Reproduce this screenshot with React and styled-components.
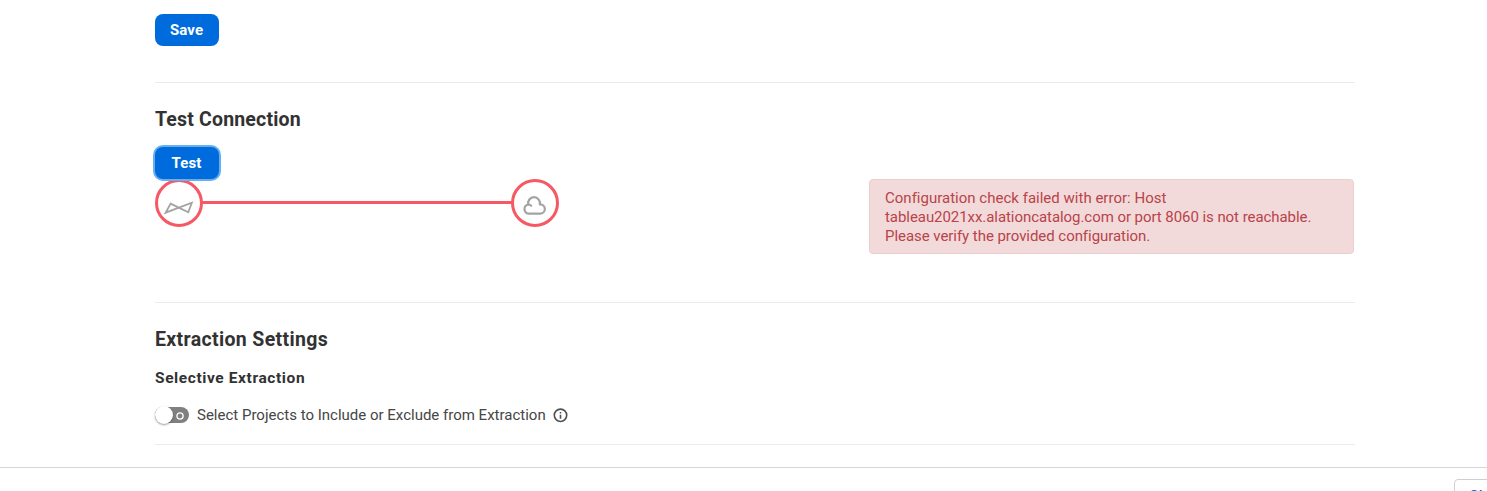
import React from "react";
import styled, { createGlobalStyle } from "styled-components";

const GlobalStyle = createGlobalStyle`
  * { box-sizing: border-box; }
  body {
    margin: 0;
    background: #fff;
    color: #333;
    font-family: Roboto, "Liberation Sans", sans-serif;
    overflow: hidden;
  }
`;

const Page = styled.div`
  display: flex;
  flex-direction: column;
  height: 491px;
  overflow: hidden;
`;

const Content = styled.main`
  flex: none;
  width: 1200px;
  height: 467px;
  margin-left: 155px;
`;

const Section = styled.section`
  height: ${(p) => p.$height}px;
  padding-top: ${(p) => p.$top}px;
  border-bottom: 1px solid #ebebeb;
`;

const Button = styled.button`
  display: block;
  width: 64px;
  height: 32px;
  padding: 0 1px 0 0;
  border: 0;
  border-radius: 8px;
  background: #006bdc;
  color: #fff;
  font: 700 15px/32px Roboto, sans-serif;
  letter-spacing: ${(p) => p.$spacing}px;
  position: relative;
  z-index: 1;
  box-shadow: ${(p) => (p.$focused ? "0 0 0 2px #66b0ee" : "none")};
`;

const Heading = styled.h2`
  margin: 0;
  font-size: 19.5px;
  line-height: 24px;
  font-weight: 700;
  letter-spacing: ${(p) => p.$spacing}px;
  color: #323232;
  white-space: nowrap;
`;

const SubHeading = styled.h3`
  margin: 16px 0 0;
  font-size: 15.5px;
  line-height: 20px;
  font-weight: 700;
  letter-spacing: 0.6px;
  color: #323232;
`;

const TestButtonSlot = styled.div`
  margin-top: 15px;
`;

const Result = styled.div`
  display: flex;
  justify-content: space-between;
  align-items: flex-start;
  padding-right: 1px;
`;

const Link = styled.div`
  display: flex;
  align-items: center;
  width: 404px;
`;

const Endpoint = styled.div`
  flex: none;
  width: 48px;
  height: 48px;
  border: 3px solid #f65864;
  border-radius: 50%;

  svg { display: block; }
`;

const Wire = styled.div`
  flex: 1;
  height: 3px;
  margin: 0 -1px 1px;
  background: #f65864;
`;

const Alert = styled.div`
  width: 485px;
  height: 75px;
  padding: 9px 15px;
  border: 1px solid #eccdd1;
  border-radius: 4px;
  background: #f2dada;
  color: #b9434a;
  font-size: 15px;
  line-height: 19px;
  white-space: nowrap;
`;

const AlertLine = styled.div`
  letter-spacing: ${(p) => p.$spacing}px;
`;

const SettingRow = styled.div`
  display: flex;
  align-items: center;
  height: 20px;
  margin-top: 17px;
`;

const Track = styled.div`
  display: flex;
  align-items: center;
  justify-content: space-between;
  width: 34px;
  height: 16px;
  padding-right: 5px;
  border-radius: 8px;
  background: #808080;
`;

const Knob = styled.span`
  width: 18px;
  height: 18px;
  border-radius: 50%;
  background: #fff;
  box-shadow: 0 1px 2px rgba(0, 0, 0, 0.4);
`;

const OffMark = styled.svg`
  width: 8px;
  height: 8px;
  margin-top: 2px;
`;

const Label = styled.span`
  margin: 0 7px 0 8px;
  width: 349px;
  font-size: 15px;
  line-height: 20px;
  color: #464646;
  white-space: nowrap;
`;

const Footer = styled.footer`
  flex: none;
  display: flex;
  height: 60px;
  padding: 11px 0 0 1454px;
  border-top: 1px solid #d6d6d8;
  background: #fff;
`;

const CloseButton = styled.button`
  flex: none;
  width: 72px;
  height: 32px;
  padding: 1px 0 0 14px;
  border: 1px solid #cfcfd1;
  border-radius: 4px;
  background: #fff;
  color: #006bdc;
  text-align: left;
  font: 500 15px/31px Roboto, sans-serif;
`;

const BowIcon = () => (
  <svg width="42" height="42" viewBox="0 0 42 42" fill="none">
    <path d="M12.6 21.6 30.3 30.3 33.8 20.7 7.6 30.7Z" stroke="#a3a3a3" strokeWidth="1.8" />
  </svg>
);

const CloudIcon = () => (
  <svg width="42" height="42" viewBox="0 0 42 42" fill="none">
    <path
      d="M14.6 31.6a4.6 4.6 0 0 1-.3-9.1 5.9 5.9 0 1 1 11.5-.2h.4a4.65 4.65 0 0 1 0 9.3Z M14.2 22.5q1.8-.1 3 1.2"
      stroke="#a3a3a3"
      strokeWidth="2.2"
      strokeLinejoin="round"
      strokeLinecap="round"
    />
  </svg>
);

const InfoIcon = () => (
  <svg width="15" height="15" viewBox="0 0 15 15" fill="none">
    <circle cx="7.5" cy="7.3" r="6.2" stroke="#505050" strokeWidth="1.6" />
    <path d="M7.5 3.9v1.6M7.5 6.8v3.9" stroke="#505050" strokeWidth="1.6" />
  </svg>
);

export default function App() {
  return (
    <>
      <GlobalStyle />
      <Page>
        <Content>
          <Section $height={83} $top={14}>
            <Button $spacing={0.1}>Save</Button>
          </Section>
          <Section $height={220} $top={25}>
            <Heading $spacing={0.17}>Test Connection</Heading>
            <TestButtonSlot>
              <Button $spacing={0.1} $focused>Test</Button>
            </TestButtonSlot>
            <Result>
              <Link>
                <Endpoint><BowIcon /></Endpoint>
                <Wire />
                <Endpoint><CloudIcon /></Endpoint>
              </Link>
              <Alert>
                <AlertLine $spacing={0.01}>Configuration check failed with error: Host</AlertLine>
                <AlertLine $spacing={-0.06}>tableau2021xx.alationcatalog.com or port 8060 is not reachable.</AlertLine>
                <AlertLine $spacing={-0.05}>Please verify the provided configuration.</AlertLine>
              </Alert>
            </Result>
          </Section>
          <Section $height={142} $top={25}>
            <Heading $spacing={0.35}>Extraction Settings</Heading>
            <SubHeading>Selective Extraction</SubHeading>
            <SettingRow>
              <Track>
                <Knob />
                <OffMark viewBox="0 0 8 8">
                  <circle cx="4" cy="4" r="3.1" fill="none" stroke="#fff" strokeWidth="1.3" />
                </OffMark>
              </Track>
              <Label>Select Projects to Include or Exclude from Extraction</Label>
              <InfoIcon />
            </SettingRow>
          </Section>
        </Content>
        <Footer>
          <CloseButton>Close</CloseButton>
        </Footer>
      </Page>
    </>
  );
}
